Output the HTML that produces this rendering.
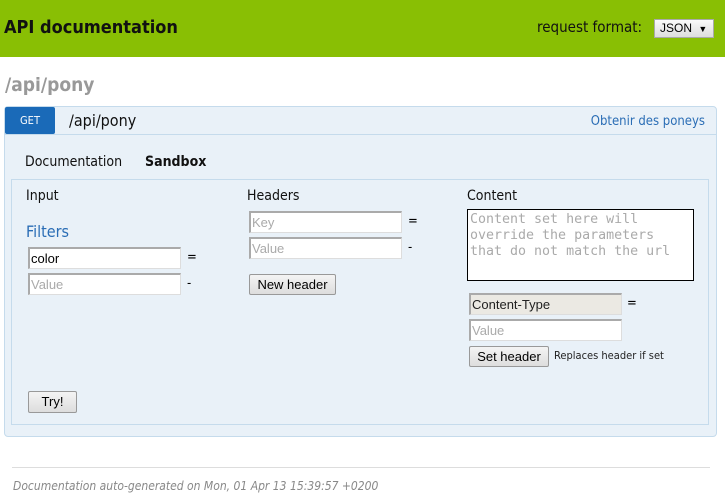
<!DOCTYPE html>
<html><head><style>
*{margin:0;padding:0;box-sizing:border-box}
body{width:725px;height:501px;position:relative;background:#fff;font-family:"DejaVu Sans Condensed","Liberation Sans",sans-serif;overflow:hidden}
.a{position:absolute;white-space:nowrap}
.in{position:absolute;height:22px;background:#fff;border:1px solid #ddd;border-top:2px solid #aaa;border-left:2px solid #aaa;font-size:13px;color:#aaa;padding:1px 1px;line-height:17px;font-family:"Liberation Sans",sans-serif}
.btn{position:absolute;background:linear-gradient(#f4f4f4,#ddd);border:1px solid #999;border-radius:2px;font-size:13px;color:#000;text-align:center;line-height:19px;font-family:"Liberation Sans",sans-serif}
</style></head><body>
<div class="a" style="left:0;top:0;width:725px;height:57px;background:#89bf04"></div>
<div class="a" style="left:4px;top:17px;font-size:18px;font-weight:bold;color:#111">API documentation</div>
<div class="a" style="left:537px;top:18px;font-size:15px;color:#111">request format:</div>
<div class="a" style="left:654px;top:19px;width:60px;height:19px;background:linear-gradient(#fafafa,#ddd);border:1px solid #aaa;font-size:12px;line-height:17px;padding-left:5px;font-family:'Liberation Sans',sans-serif">JSON <span style="font-size:9px;margin-left:3px">▼</span></div>
<div class="a" style="left:5px;top:74px;font-size:19px;font-weight:bold;color:#999">/api/pony</div>
<div class="a" style="left:4px;top:106px;width:713px;height:331px;background:#e9f1f8;border:1px solid #c5dbec;border-radius:4px"></div>
<div class="a" style="left:5px;top:134px;width:711px;height:1px;background:#c5dbec"></div>
<div class="a" style="left:5px;top:107px;width:50px;height:27px;background:#1a6ab8;border-radius:2px;color:#fff;font-size:11px;text-align:center;line-height:27px">GET</div>
<div class="a" style="left:69px;top:111px;font-size:16px;color:#111">/api/pony</div>
<div class="a" style="right:20px;top:114px;font-size:13px;color:#2a6db5">Obtenir des poneys</div>
<div class="a" style="left:25px;top:154px;font-size:14px;color:#111">Documentation</div>
<div class="a" style="left:145px;top:154px;font-size:14px;font-weight:bold;color:#111">Sandbox</div>
<div class="a" style="left:11px;top:179px;width:698px;height:246px;border:1px solid #c5dbec"></div>
<div class="a" style="left:26px;top:188px;font-size:14px;color:#111">Input</div>
<div class="a" style="left:26px;top:222px;font-size:16px;color:#2a6db5">Filters</div>
<div class="in" style="left:28px;top:247px;width:153px;color:#000">color</div>
<div class="a" style="left:187px;top:250px;font-size:13px">=</div>
<div class="in" style="left:28px;top:273px;width:153px">Value</div>
<div class="a" style="left:187px;top:276px;font-size:13px">-</div>
<div class="a" style="left:247px;top:188px;font-size:14px;color:#111">Headers</div>
<div class="in" style="left:249px;top:211px;width:153px">Key</div>
<div class="a" style="left:408px;top:214px;font-size:13px">=</div>
<div class="in" style="left:249px;top:237px;width:153px">Value</div>
<div class="a" style="left:408px;top:240px;font-size:13px">-</div>
<div class="btn" style="left:249px;top:274px;width:87px;height:21px">New header</div>
<div class="a" style="left:467px;top:188px;font-size:14px;color:#111">Content</div>
<div class="a" style="left:467px;top:209px;width:227px;height:72px;background:#fff;border:1px solid #000;font-family:'DejaVu Sans Mono','Liberation Mono',monospace;font-size:13.3px;color:#aaa;line-height:16px;padding:2px 2px;white-space:normal">Content set here will override the parameters that do not match the url</div>
<div class="in" style="left:469px;top:293px;width:153px;background:#ebe9e3;color:#222">Content-Type</div>
<div class="a" style="left:627px;top:296px;font-size:13px">=</div>
<div class="in" style="left:469px;top:319px;width:153px">Value</div>
<div class="btn" style="left:469px;top:346px;width:80px;height:21px">Set header</div>
<div class="a" style="left:554px;top:349px;font-size:11px;color:#222">Replaces header if set</div>
<div class="btn" style="left:28px;top:391px;width:49px;height:22px;line-height:20px">Try!</div>
<div class="a" style="left:12px;top:467px;width:698px;height:1px;background:#ddd"></div>
<div class="a" style="left:13px;top:479px;font-size:12px;font-style:italic;color:#888">Documentation auto-generated on Mon, 01 Apr 13 15:39:57 +0200</div>
</body></html>
